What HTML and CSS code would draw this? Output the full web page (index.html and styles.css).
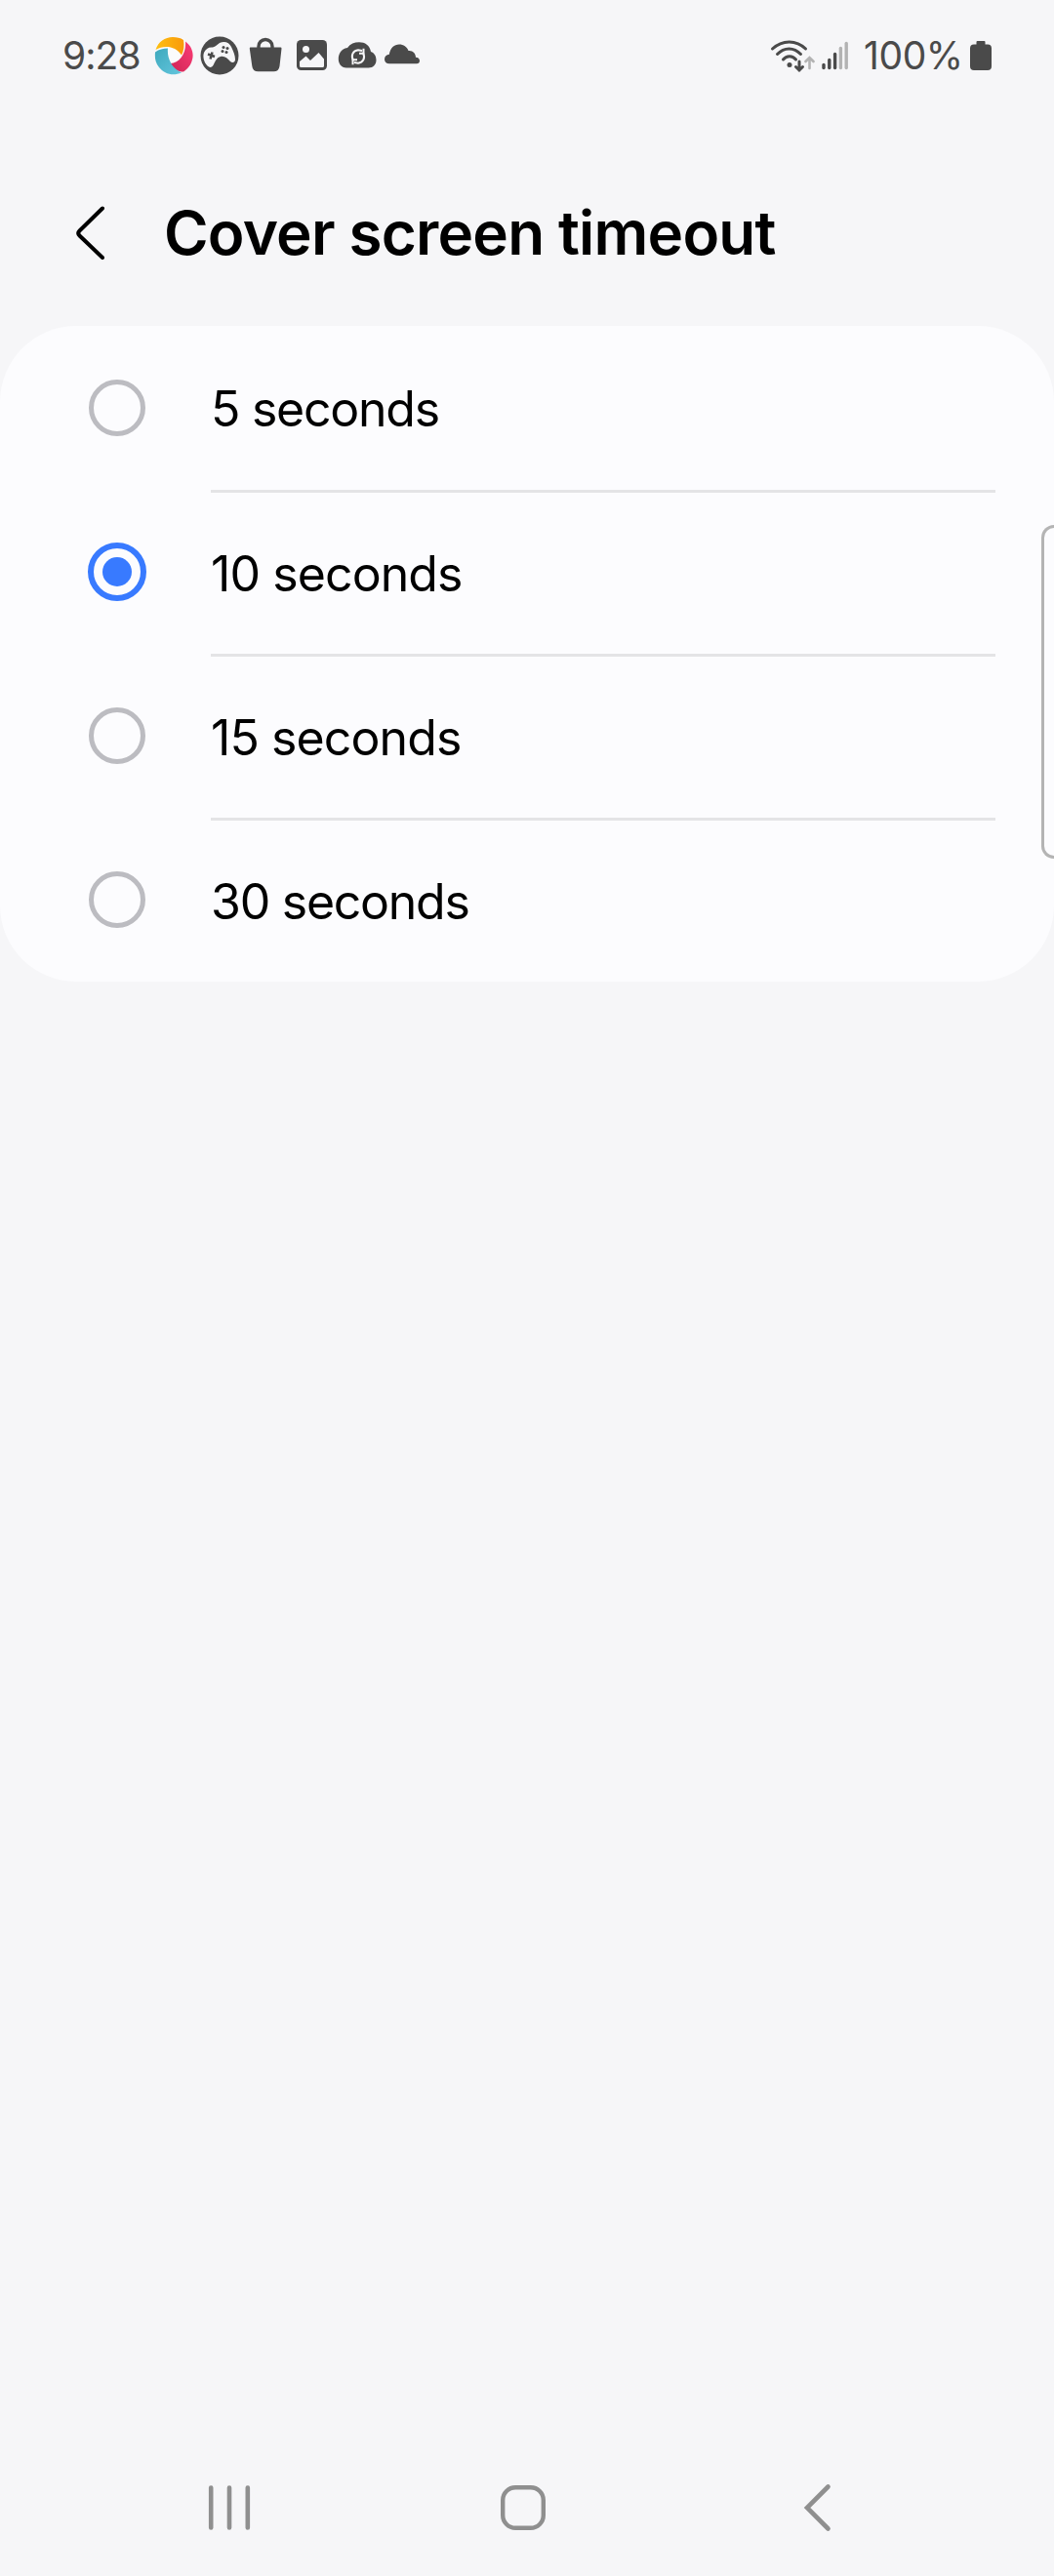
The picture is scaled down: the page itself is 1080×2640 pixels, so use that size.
FILE: index.html
```html
<!DOCTYPE html>
<html lang="en">
<head>
<meta charset="utf-8">
<title>Cover screen timeout</title>
<link rel="stylesheet" href="styles.css">
</head>
<body>
<div class="screen">
  <div class="status-bar">
    <span class="clock">9:28</span>
    <div class="notifications">
      <svg class="note" viewBox="0 0 40 40" width="40" height="40">
        <defs>
          <linearGradient id="gold" x1="0" x2="1"><stop offset="0" stop-color="#fdbf12"/><stop offset="1" stop-color="#f99a0a"/></linearGradient>
          <linearGradient id="rose" x1="1" y1="0" x2="0" y2="1"><stop offset="0" stop-color="#fb3c76"/><stop offset="1" stop-color="#cf2655"/></linearGradient>
          <linearGradient id="aqua" x1="0" y1="0" x2="1" y2="1"><stop offset="0" stop-color="#3ea9bd"/><stop offset="1" stop-color="#63c5dd"/></linearGradient>
        </defs>
        <path fill="#fff" d="M3 9 30 2 38 22 29 37 6 34Z" opacity=".6"/>
        <path fill="url(#gold)" d="M1.500 14C4 6 11 1 19 1c4 0 8 .8 11 3 1 5 .5 11-2 15.500C22 10 10 9 1.500 14Z"/>
        <path fill="url(#rose)" d="M32 5.500C38 10 41 17 39 24c-1.500 6-5 10-9 12.500C24 36.500 19 34 16.500 28 26 28 33 18 32 5.500Z"/>
        <path fill="url(#aqua)" d="M14 12.500C13 21 17 33 28 37.500c-9 4-18 1-23-5.500C1 27 .5 22 1 16.500 5 13.500 9 12.500 14 12.500Z"/>
      </svg>
      <svg class="note" viewBox="0 0 40 40" width="40" height="40">
        <circle cx="20" cy="20" r="19.500" fill="#4a4a4a"/>
        <path fill="#f6f6f8" d="M4 17c1.500-4 5-6 9-5.500 3-.5 4-2.500 7-4.500 5-2.500 10-.5 12 4 2 4 4 9 4 13 0 3-3 4-5 2-3-3.500-6-6-10-5-4 1-5 4-7 8-1.500 3-4 4-6.500 1.500C4 27 2.500 21 4 17Z"/>
        <path stroke="#4a4a4a" stroke-width="2.600" d="m8 18.500 7 2.500m-4.500 2.500 2-7"/>
        <g fill="#4a4a4a"><circle cx="24" cy="11.500" r="1.500"/><circle cx="28" cy="12.500" r="1.500"/><circle cx="23" cy="15.500" r="1.500"/><circle cx="27" cy="16.500" r="1.500"/></g>
      </svg>
      <svg class="note" viewBox="0 0 40 40" width="40" height="40">
        <path fill="#4a4a4a" d="M4.500 11.500h31q1 0 1 1.200l-2 18q-.8 5.600-6 5.600H12.500q-5.500 0-6.200-5.600l-2.500-18q0-1.200.7-1.200Z"/>
        <path fill="none" stroke="#4a4a4a" stroke-width="3.400" d="M13 12.500v-2a7 7 0 0 1 14 0v2"/>
      </svg>
      <svg class="note" viewBox="0 0 40 40" width="40" height="40">
        <rect x="5" y="4" width="31" height="31" rx="4.500" fill="#4a4a4a"/>
        <circle cx="14.500" cy="13.500" r="3.500" fill="#f6f6f8"/>
        <path fill="#f6f6f8" d="m8 26 6.500-5.500 4.500 4.500 8.500-8 5.500 6.500v7q0 1.500-1.500 1.500h-22Q8 32 8 30.500Z"/>
      </svg>
      <svg class="note" viewBox="0 0 40 40" width="40" height="40">
        <path fill="#4a4a4a" d="M9 32.500C3.500 32.500.8 28 .8 23.500c0-5 2.500-10.500 9.200-11.500C13 8 17 6.300 22 6.300c6 0 11 3.200 12 9.700 3 1 5.500 4 5.500 8.500 0 4.500-3 8-8 8Z"/>
        <g fill="none" stroke="#f6f6f8" stroke-width="2">
          <path d="M15.800 24.500C13.500 20 15.500 14.800 21 14.300l4 .7M26.500 12.800V17.800H22"/>
          <path d="M26.200 17.800C28.500 22.500 26 27.200 21 27.700l-4-.7M15.500 29.200V24.200H20"/>
        </g>
      </svg>
      <svg class="note" viewBox="0 0 40 40" width="40" height="40">
        <path fill="#4a4a4a" d="M6 28.300c-3.200 0-5-2-5-4.500 0-2.800 2-4.800 4.800-5C7 12 11 8.500 16 8.500c4.500 0 8 2.500 9.500 6.500 4.500-.5 7.500 3 7.500 6.800 2.500.2 4 1.500 4 3.500 0 1.800-1.200 3-3 3Z"/>
      </svg>
    </div>
    <div class="system">
      <svg class="wifi" viewBox="0 0 46 36" width="46" height="36">
        <g fill="none" stroke="#4a4a4a" stroke-width="3" stroke-linecap="round">
          <path d="M2.500 11C12.500 1.500 27 1.500 36.500 11"/><path d="M7.500 16.500c7-7.500 17-7.500 24 0"/><path d="M13.500 22c3.500-4.500 9.500-4.500 13 0"/>
          <path d="M30 24v9m-3.500-3.500L30 33l3.500-3.500"/>
        </g>
        <circle cx="20" cy="27.500" r="2.500" fill="#4a4a4a"/>
        <path fill="none" stroke="#b3b3b3" stroke-width="2.600" stroke-linecap="round" d="M40.500 31V20.500M36.500 24l4-4 4 4"/>
      </svg>
      <svg class="signal" viewBox="0 0 28 30" width="28" height="30">
        <g stroke="#4a4a4a" stroke-width="3.400" stroke-linecap="round"><path d="M2 24.500v3"/><path d="M7.800 19.500v8"/><path d="M13.600 13.500v14"/></g>
        <g stroke="#b3b3b3" stroke-width="3.400" stroke-linecap="round"><path d="M19.400 7.500v20"/><path d="M25.200 2.500v25"/></g>
      </svg>
      <span class="percent">100%</span>
      <svg class="battery" viewBox="0 0 22 32" width="22" height="32"><path fill="#4a4a4a" d="M7.500 1h7q1 0 1 1v2.500H18q4 0 4 4V27q0 4-4 4H4q-4 0-4-4V8.500q0-4 4-4h2.500V2q0-1 1-1Z"/></svg>
    </div>
  </div>

  <header class="header">
    <svg class="back" viewBox="0 0 32 58" width="32" height="58"><path fill="none" stroke="#000" stroke-width="4" stroke-linecap="round" stroke-linejoin="round" d="M28 3.500 4.500 26.500q-2.500 2.500 0 5L28 54"/></svg>
    <h1 class="title">Cover screen timeout</h1>
  </header>

  <main class="options">
    <div class="option"><span class="radio"></span><span class="label wide-digits">5 seconds</span></div>
    <div class="option"><span class="radio radio-on"></span><span class="label">10 seconds</span></div>
    <div class="option"><span class="radio"></span><span class="label">15 seconds</span></div>
    <div class="option"><span class="radio"></span><span class="label wide-digits">30 seconds</span></div>
    <div class="edge-handle"></div>
  </main>

  <nav class="nav-bar">
    <svg viewBox="0 0 60 60" width="60" height="60"><path stroke="#8f8f8f" stroke-width="4.600" stroke-linecap="round" d="M11.200 9.500v41M30 9.500v41M48.800 9.500v41"/></svg>
    <svg viewBox="0 0 60 60" width="60" height="60"><rect x="9.200" y="9.200" width="41.600" height="41.600" rx="13" fill="none" stroke="#8f8f8f" stroke-width="4.400"/></svg>
    <svg viewBox="0 0 60 60" width="60" height="60"><path fill="none" stroke="#8f8f8f" stroke-width="4.600" stroke-linecap="round" d="M41.500 8.500 20 30l21.500 21.500"/></svg>
  </nav>
</div>
</body>
</html>
```

FILE: styles.css
```css
* {
  box-sizing: border-box;
}

body {
  margin: 0;
  background: #f6f6f8;
  color: #000;
  font-family: Inter, Roboto, sans-serif;
}

.screen {
  display: flex;
  flex-direction: column;
  width: 1080px;
  height: 2640px;
  overflow: hidden;
}

.status-bar {
  display: flex;
  align-items: center;
  height: 114px;
  padding: 0 64px 0 64px;
  color: #4a4a4a;
  font-size: 39px;
  font-weight: 400;
  line-height: 48px;
}

.clock {
  width: 94px;
  letter-spacing: -0.9px;
  white-space: nowrap;
}

.notifications {
  display: flex;
  gap: 7px;
}

.note {
  display: block;
}

.system {
  display: flex;
  align-items: center;
  margin-left: auto;
}

.wifi {
  margin-right: 7px;
}

.signal {
  margin-right: 15px;
}

.percent {
  width: 109px;
  letter-spacing: -0.4px;
  white-space: nowrap;
}

.header {
  display: flex;
  align-items: center;
  height: 220px;
  padding: 30px 0 0 77px;
}

.back {
  margin-right: 59px;
}

.title {
  margin: 0;
  font-size: 62px;
  font-weight: 600;
  letter-spacing: -0.82px;
  line-height: 80px;
  white-space: nowrap;
}

.options {
  position: relative;
  background: #fcfcfe;
  border-radius: 78px;
}

.option {
  display: flex;
  align-items: center;
  height: 168px;
  padding: 0 60px 0 90px;
}

.radio {
  display: flex;
  width: 58px;
  height: 58px;
  margin: 0 67px 0 1px;
  border: 5px solid #bcbcc1;
  border-radius: 50%;
}

.radio-on {
  width: 60px;
  height: 60px;
  margin: 0 66px 0 0;
  padding: 9px;
  border: 6px solid #387aff;
}

.radio-on::after {
  content: "";
  flex: 1;
  border-radius: 50%;
  background: #387aff;
}

.label {
  flex: 1;
  height: 168px;
  padding-top: 2px;
  font-size: 50px;
  letter-spacing: -0.9px;
  line-height: 166px;
  white-space: nowrap;
}

.wide-digits {
  letter-spacing: -1.25px;
}

.option + .option .label {
  padding-top: 0;
  border-top: 3px solid #e4e4e6;
}

.edge-handle {
  position: absolute;
  top: 204px;
  right: 0;
  width: 13px;
  height: 342px;
  border: 3px solid #b4b4b4;
  border-right: 0;
  border-radius: 14px 0 0 14px;
}

.nav-bar {
  display: flex;
  justify-content: space-between;
  margin-top: auto;
  padding: 0 213px 40px 205px;
}
```
